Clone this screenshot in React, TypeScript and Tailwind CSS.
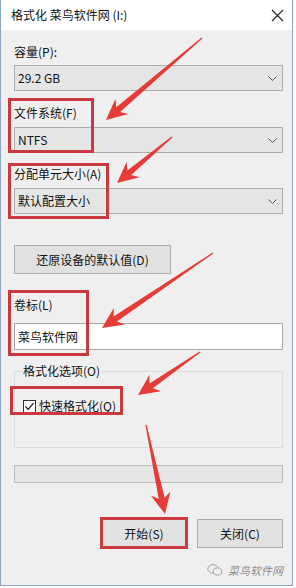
import React from 'react';

type Pt = [number, number];

// red annotation arrows, tail -> tip
const arrows: { tail: Pt; tip: Pt }[] = [
  { tail: [202, 38], tip: [106, 120] },
  { tail: [172, 137], tip: [117, 183] },
  { tail: [213, 253], tip: [102, 328] },
  { tail: [200, 352], tip: [138, 395] },
  { tail: [146, 425], tip: [165, 514] },
];

const arrowPoints = (tail: Pt, tip: Pt) => {
  const dx = tip[0] - tail[0];
  const dy = tip[1] - tail[1];
  const len = Math.hypot(dx, dy);
  const ux = dx / len;
  const uy = dy / len;
  const nx = -uy;
  const ny = ux;
  const L = 21;
  const W = 10;
  const bx = tip[0] - ux * L;
  const by = tip[1] - uy * L;
  const nb = tip[0] - ux * (L - 5);
  const nby = tip[1] - uy * (L - 5);
  const pts: Pt[] = [
    [tail[0] + nx * 0.6, tail[1] + ny * 0.6],
    [nb + nx * 3, nby + ny * 3],
    [bx + nx * W, by + ny * W],
    tip,
    [bx - nx * W, by - ny * W],
    [nb - nx * 3, nby - ny * 3],
    [tail[0] - nx * 0.6, tail[1] - ny * 0.6],
  ];
  return pts.map((p) => p.join(',')).join(' ');
};

const Chevron = () => (
  <svg width="9" height="5" viewBox="0 0 9 5" className="mr-[5px]">
    <path d="M0.5 0.5 L4.5 4.5 L8.5 0.5" fill="none" stroke="#555" strokeWidth="1" />
  </svg>
);

const Select = ({ value }: { value: string }) => (
  <div className="h-[26px] flex items-center justify-between bg-[#e5e5e5] border border-[#adadad] pl-[3px]">
    <span>{value}</span>
    <Chevron />
  </div>
);

const App = () => {
  return (
    <div
      className="relative w-[296px] h-[588px] bg-white text-[12px] leading-[18px] text-[#111] overflow-hidden"
      style={{ fontFamily: '"Noto Sans CJK SC", "Noto Sans", sans-serif' }}
    >
      <div className="w-[293px] h-[586px] border-x border-b border-[#8ea4c2] bg-[#f0eff0] flex flex-col">
        {/* 标题栏 */}
        <div className="h-[30px] bg-white flex items-center justify-between pl-[10px] pr-[8px]">
          <span>格式化 菜鸟软件网 (I:)</span>
          <svg width="13" height="13" viewBox="0 0 13 13">
            <path d="M1 1 L12 12 M12 1 L1 12" stroke="#222" strokeWidth="1.1" />
          </svg>
        </div>

        {/* 内容 */}
        <div className="flex flex-col pl-[13px] pr-[9px]">
          <div className="mt-[13px]">容量(P):</div>
          <div className="mt-[4px]">
            <Select value="29.2 GB" />
          </div>

          <div className="mt-[13px]">文件系统(F)</div>
          <div className="mt-[5px]">
            <Select value="NTFS" />
          </div>

          <div className="mt-[12px]">分配单元大小(A)</div>
          <div className="mt-[5px]">
            <Select value="默认配置大小" />
          </div>

          <button className="mt-[31px] w-[157px] h-[29px] bg-[#e1e1e1] border border-[#adadad] flex items-center justify-center">
            还原设备的默认值(D)
          </button>

          <div className="mt-[22px]">卷标(L)</div>
          <div className="mt-[9px] h-[27px] bg-white border border-[#a8a8a8] flex items-center pl-[3px]">
            菜鸟软件网
          </div>

          {/* 格式化选项 */}
          <div className="relative mt-[21px] h-[77px] border border-[#dcdcdc]">
            <span className="absolute -top-[10px] left-[7px] px-[1px] bg-[#f0eff0]">格式化选项(O)</span>
            <div className="mt-[25px] ml-[8px] flex items-center gap-[3px]">
              <div className="w-[13px] h-[13px] bg-white border border-[#333] flex items-center justify-center">
                <svg width="11" height="11" viewBox="0 0 11 11">
                  <path d="M1.5 5.5 L4.2 8.3 L9.5 2.2" fill="none" stroke="#111" strokeWidth="1.2" />
                </svg>
              </div>
              <span>快速格式化(Q)</span>
            </div>
          </div>

          {/* 进度条 */}
          <div className="mt-[17px] h-[18px] bg-[#e6e6e6] border border-[#bcbcbc]" />

          <div className="mt-[36px] flex justify-end gap-[10px]">
            <button className="w-[86px] h-[29px] bg-[#e1e1e1] border border-[#adadad] flex items-center justify-center">
              开始(S)
            </button>
            <button className="w-[86px] h-[29px] bg-[#e1e1e1] border border-[#adadad] flex items-center justify-center">
              关闭(C)
            </button>
          </div>

          {/* 水印 */}
          <div className="mt-[13px] flex items-center justify-end gap-[5px] text-[11px] text-[#8a8a8a]">
            <svg width="16" height="14" viewBox="0 0 16 14">
              <ellipse cx="6" cy="6" rx="5.2" ry="4.4" fill="none" stroke="#9a9a9a" strokeWidth="0.9" />
              <ellipse cx="10.5" cy="8.5" rx="4.3" ry="3.6" fill="#f0eff0" stroke="#9a9a9a" strokeWidth="0.9" />
            </svg>
            <span className="italic">菜鸟软件网</span>
          </div>
        </div>
      </div>

      {/* 红框标注 */}
      <div className="absolute left-[8px] top-[98px] w-[86px] h-[55px] border-[3px] border-[#c9393e]" />
      <div className="absolute left-[8px] top-[163px] w-[101px] h-[56px] border-[3px] border-[#c9393e]" />
      <div className="absolute left-[8px] top-[290px] w-[81px] h-[66px] border-[3px] border-[#c9393e]" />
      <div className="absolute left-[10px] top-[386px] w-[113px] h-[29px] border-[3px] border-[#c9393e]" />
      <div className="absolute left-[100px] top-[517px] w-[88px] h-[32px] border-[3px] border-[#c9393e]" />

      {/* 红色箭头 */}
      <svg className="absolute inset-0 pointer-events-none" width="296" height="588">
        {arrows.map((a, i) => (
          <polygon key={i} points={arrowPoints(a.tail, a.tip)} fill="#e63b37" />
        ))}
      </svg>
    </div>
  );
};

export default App;
